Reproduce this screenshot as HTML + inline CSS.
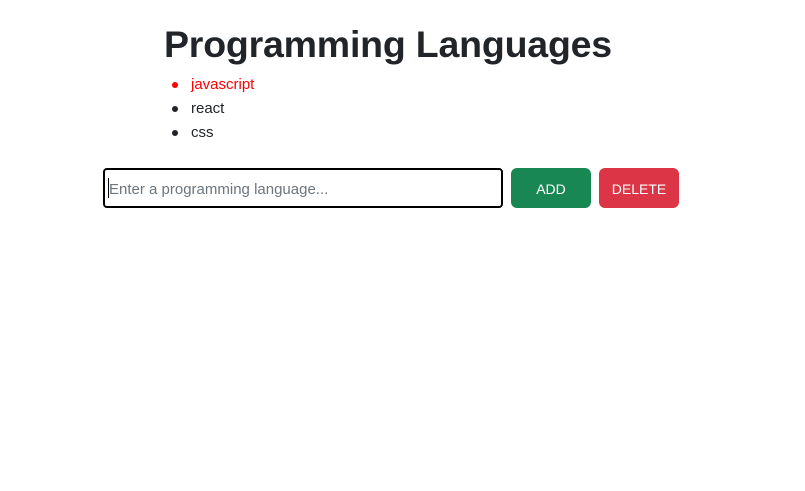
<!DOCTYPE html>
<html><head><style>
body{margin:0;background:#fff;font-family:"Liberation Sans",sans-serif;color:#212529;width:805px;height:491px;position:relative}
h1{position:absolute;left:164px;top:21px;margin:0;font-size:37.5px;font-weight:bold;line-height:46px;letter-spacing:-0.2px}
ul{position:absolute;left:165px;top:73px;margin:0;padding:0 0 0 26px;font-size:15px;line-height:24px;list-style:none}
li{position:relative}
li:before{content:"";position:absolute;left:-19px;top:9px;width:6px;height:6px;border-radius:50%;background:currentColor}
.in{position:absolute;left:103px;top:168px;width:396px;height:36px;border:2px solid #000;border-radius:4px}
.in span{position:absolute;left:4px;top:11px;font-size:15px;color:#6c757d}
.in i{position:absolute;left:3px;top:8px;width:1px;height:20px;background:#000}
.b{position:absolute;top:168px;width:80px;height:40px;border-radius:6px;color:#fff;font-size:14px;text-align:center;line-height:42px}
</style></head><body>
<h1>Programming Languages</h1>
<ul><li style="color:red">javascript</li><li>react</li><li>css</li></ul>
<div class="in"><i></i><span>Enter a programming language...</span></div>
<div class="b" style="left:511px;background:#198754">ADD</div>
<div class="b" style="left:599px;background:#dc3545">DELETE</div>
</body></html>
